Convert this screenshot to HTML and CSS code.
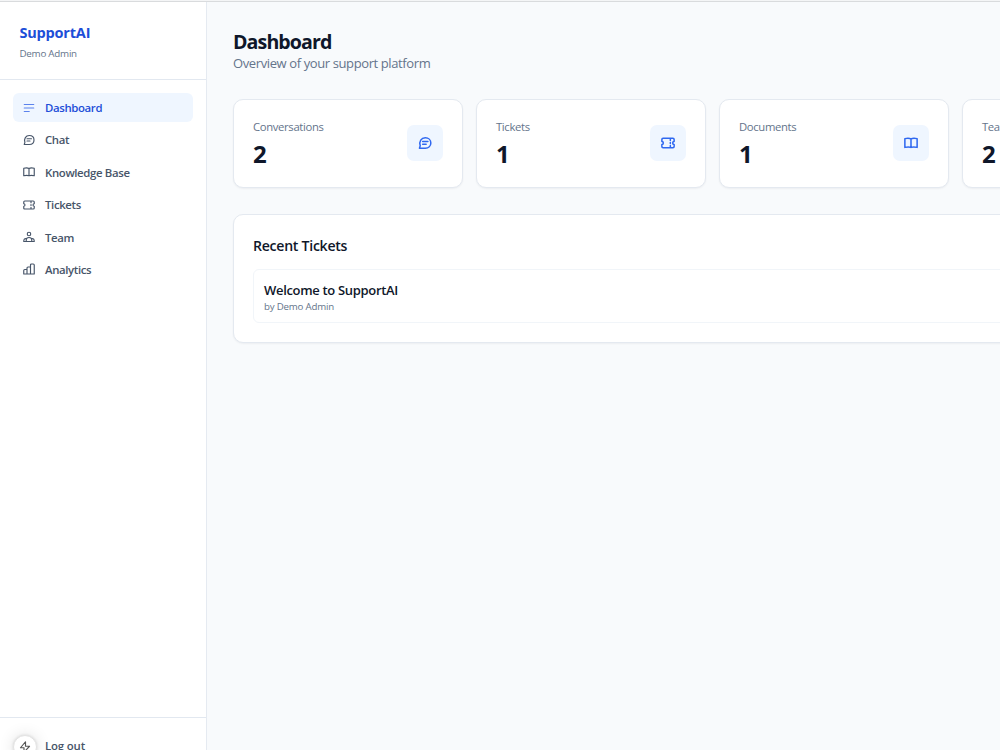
FILE: index.html
```html
<!DOCTYPE html>
<html lang="en">
<head>
<meta charset="utf-8">
<title>SupportAI</title>
<link rel="stylesheet" href="styles.css">
</head>
<body>
<svg class="sprite" aria-hidden="true">
  <symbol id="menu" viewBox="0 0 24 24"><path d="M2.500 5h19M2.500 12h19M2.500 19h10"/></symbol>
  <symbol id="chat" viewBox="0 0 24 24"><path d="M8 9.500h9M8 14h6M12.500 3c5.500 0 9.500 3.700 9.500 9s-4 9-9.500 9H2.500l1.300-4.200C1.500 9.500 5.500 3 12.500 3z"/></symbol>
  <symbol id="book" viewBox="0 0 24 24"><path d="M12 5C9.500 3.500 5.500 3.500 1.500 4.500v15c4-1 8-1 10.500 0 2.500-1 6.500-1 10.500 0v-15c-4-1-8-1-10.500.5zM12 5v14.500"/></symbol>
  <symbol id="ticket" viewBox="0 0 24 24"><path d="M3.500 4h17Q22.500 4 22.500 6V9.500a2.500 2.500 0 0 0 0 5v3.500q0 2-2 2h-17Q1.500 20 1.500 18v-3.500a2.500 2.500 0 0 0 0-5V6Q1.500 4 3.500 4zM16 4v3.500M16 11v2M16 16.500V20"/></symbol>
  <symbol id="team" viewBox="0 0 24 24"><circle cx="12" cy="6" r="3.500"/><path d="M6.500 21v-3.500a5.500 4.500 0 0 1 11 0V21M6.500 15C3 14.500 1.500 17 1.500 21h21c0-4-1.500-6.500-5-6"/></symbol>
  <symbol id="bars" viewBox="0 0 24 24"><path d="M1.500 22v-7q0-2 2-2H8v9zM8 22V10q0-2 2-2h5v14zM15 22V4q0-2 2-2h3.500q2 0 2 2v18z"/></symbol>
  <symbol id="bolt" viewBox="0 0 24 24"><path d="M13 1.500 3 13.500h7v9l11-12h-8z"/></symbol>
</svg>
<div class="app">
  <aside class="sidebar">
    <header class="brand">
      <div class="brand-name">SupportAI</div>
      <div class="brand-user">Demo Admin</div>
    </header>
    <nav class="nav">
      <a class="nav-item active"><svg class="icon"><use href="#menu"/></svg><span>Dashboard</span></a>
      <a class="nav-item"><svg class="icon"><use href="#chat"/></svg><span>Chat</span></a>
      <a class="nav-item"><svg class="icon"><use href="#book"/></svg><span>Knowledge Base</span></a>
      <a class="nav-item"><svg class="icon"><use href="#ticket"/></svg><span>Tickets</span></a>
      <a class="nav-item"><svg class="icon"><use href="#team"/></svg><span>Team</span></a>
      <a class="nav-item"><svg class="icon"><use href="#bars"/></svg><span>Analytics</span></a>
    </nav>
    <footer class="account"><a class="logout">Log out</a></footer>
    <button class="tools" aria-label="Tools"><svg class="icon"><use href="#bolt"/></svg></button>
  </aside>
  <main class="main">
    <h1 class="title">Dashboard</h1>
    <p class="subtitle">Overview of your support platform</p>
    <section class="stats">
      <article class="card stat"><div><div class="stat-label">Conversations</div><div class="stat-value">2</div></div><div class="stat-icon"><svg class="icon"><use href="#chat"/></svg></div></article>
      <article class="card stat"><div><div class="stat-label">Tickets</div><div class="stat-value">1</div></div><div class="stat-icon"><svg class="icon"><use href="#ticket"/></svg></div></article>
      <article class="card stat"><div><div class="stat-label">Documents</div><div class="stat-value">1</div></div><div class="stat-icon"><svg class="icon"><use href="#book"/></svg></div></article>
      <article class="card stat"><div><div class="stat-label">Team</div><div class="stat-value">2</div></div><div class="stat-icon"><svg class="icon"><use href="#team"/></svg></div></article>
    </section>
    <section class="card recent">
      <h2 class="recent-title">Recent Tickets</h2>
      <div class="ticket">
        <div class="ticket-name">Welcome to SupportAI</div>
        <div class="ticket-by">by Demo Admin</div>
      </div>
    </section>
  </main>
</div>
</body>
</html>
```
FILE: styles.css
```css
* { box-sizing: border-box; }
body {
  margin: 0;
  height: 750px;
  overflow: hidden;
  background: #f8fafc;
  font-family: "Open Sans", "Noto Sans", sans-serif;
  color: #0f172a;
}
.sprite { display: none; }
.icon {
  display: block;
  width: 12px;
  height: 12px;
  flex: none;
  fill: none;
  stroke: currentColor;
  stroke-width: 2.300;
  stroke-linejoin: round;
  stroke-linecap: round;
}
.app {
  display: flex;
  height: 750px;
  padding-top: 1px;
  border-top: 1px solid #f4f5f6;
  box-shadow: inset 0 1px 0 #d9dbdd;
  overflow: hidden;
}
.sidebar {
  position: relative;
  display: flex;
  flex-direction: column;
  flex: none;
  width: 207px;
  background: #fff;
  border-right: 1px solid #e5eaf1;
}
.brand {
  height: 78px;
  padding: 20px 19.500px 0;
  border-bottom: 1px solid #e2e8f0;
}
.brand-name {
  font-size: 14.500px;
  line-height: 22px;
  font-weight: 700;
  letter-spacing: -0.200px;
  color: #1d4ed8;
}
.brand-user {
  margin-top: 2px;
  font-size: 9.800px;
  line-height: 16px;
  letter-spacing: -0.250px;
  color: #64748b;
}
.nav {
  display: flex;
  flex-direction: column;
  gap: 3.400px;
  padding: 13px;
}
.nav-item {
  display: flex;
  align-items: center;
  gap: 10px;
  height: 29px;
  padding-left: 10px;
  border-radius: 6px;
  font-size: 11.400px;
  line-height: 15px;
  font-weight: 600;
  letter-spacing: -0.360px;
  color: #475569;
}
.nav-item.active { background: #eff6ff; color: #1d4ed8; }
.nav-item.active .icon { color: #5b82ed; }
.account {
  height: 33px;
  margin-top: auto;
  padding: 19px 0 0 45px;
  border-top: 1px solid #e2e8f0;
}
.logout {
  display: block;
  font-size: 11.400px;
  line-height: 18px;
  font-weight: 600;
  letter-spacing: -0.150px;
  color: #475569;
}
.tools {
  position: absolute;
  left: 13px;
  top: 733px;
  width: 24px;
  height: 24px;
  padding: 5px;
  border: 1px solid #e3e3e3;
  border-radius: 50%;
  background: #fff;
  color: #555;
  box-shadow: 0 0 16px rgba(0, 0, 0, 0.120), 0 0 3px rgba(0, 0, 0, 0.120);
}
.tools .icon { width: 12px; height: 12px; }
.main {
  flex: none;
  width: 1014px;
  padding: 27px 26px 0;
}
.title {
  margin: 0;
  font-size: 19.600px;
  line-height: 26px;
  font-weight: 700;
  letter-spacing: -0.900px;
}
.subtitle {
  margin: 0;
  font-size: 13px;
  line-height: 16px;
  letter-spacing: -0.390px;
  color: #64748b;
}
.stats {
  display: grid;
  grid-template-columns: repeat(4, 230px);
  gap: 13px;
  margin-top: 27.500px;
}
.card {
  background: #fff;
  border: 1px solid #e4e9f0;
  border-radius: 10px;
  box-shadow: 0 1px 2px rgba(15, 23, 42, 0.050);
}
.stat {
  display: flex;
  justify-content: space-between;
  align-items: center;
  height: 89.500px;
  padding: 0 19px;
}
.stat-label {
  padding-top: 3px;
  font-size: 11.300px;
  line-height: 16px;
  letter-spacing: -0.350px;
  color: #64748b;
}
.stat-value {
  margin-top: 3px;
  font-size: 24px;
  line-height: 32px;
  font-weight: 700;
}
.stat-icon {
  display: flex;
  align-items: center;
  justify-content: center;
  width: 36px;
  height: 36px;
  border-radius: 7px;
  background: #eff6ff;
  color: #2f68f0;
}
.stat-icon .icon { width: 14px; height: 14px; stroke-width: 2.600; }
.recent {
  height: 129.500px;
  margin-top: 25.500px;
  padding: 21px 19px;
}
.recent-title {
  margin: 0;
  font-size: 14.100px;
  line-height: 20px;
  font-weight: 600;
  letter-spacing: -0.270px;
}
.ticket {
  height: 54px;
  margin-top: 13px;
  padding: 11px 10px;
  border: 1px solid #f1f5f9;
  border-radius: 6px;
}
.ticket-name {
  font-size: 13px;
  line-height: 18px;
  font-weight: 600;
  letter-spacing: -0.320px;
}
.ticket-by {
  font-size: 9.700px;
  line-height: 15px;
  letter-spacing: -0.200px;
  color: #64748b;
}
```
